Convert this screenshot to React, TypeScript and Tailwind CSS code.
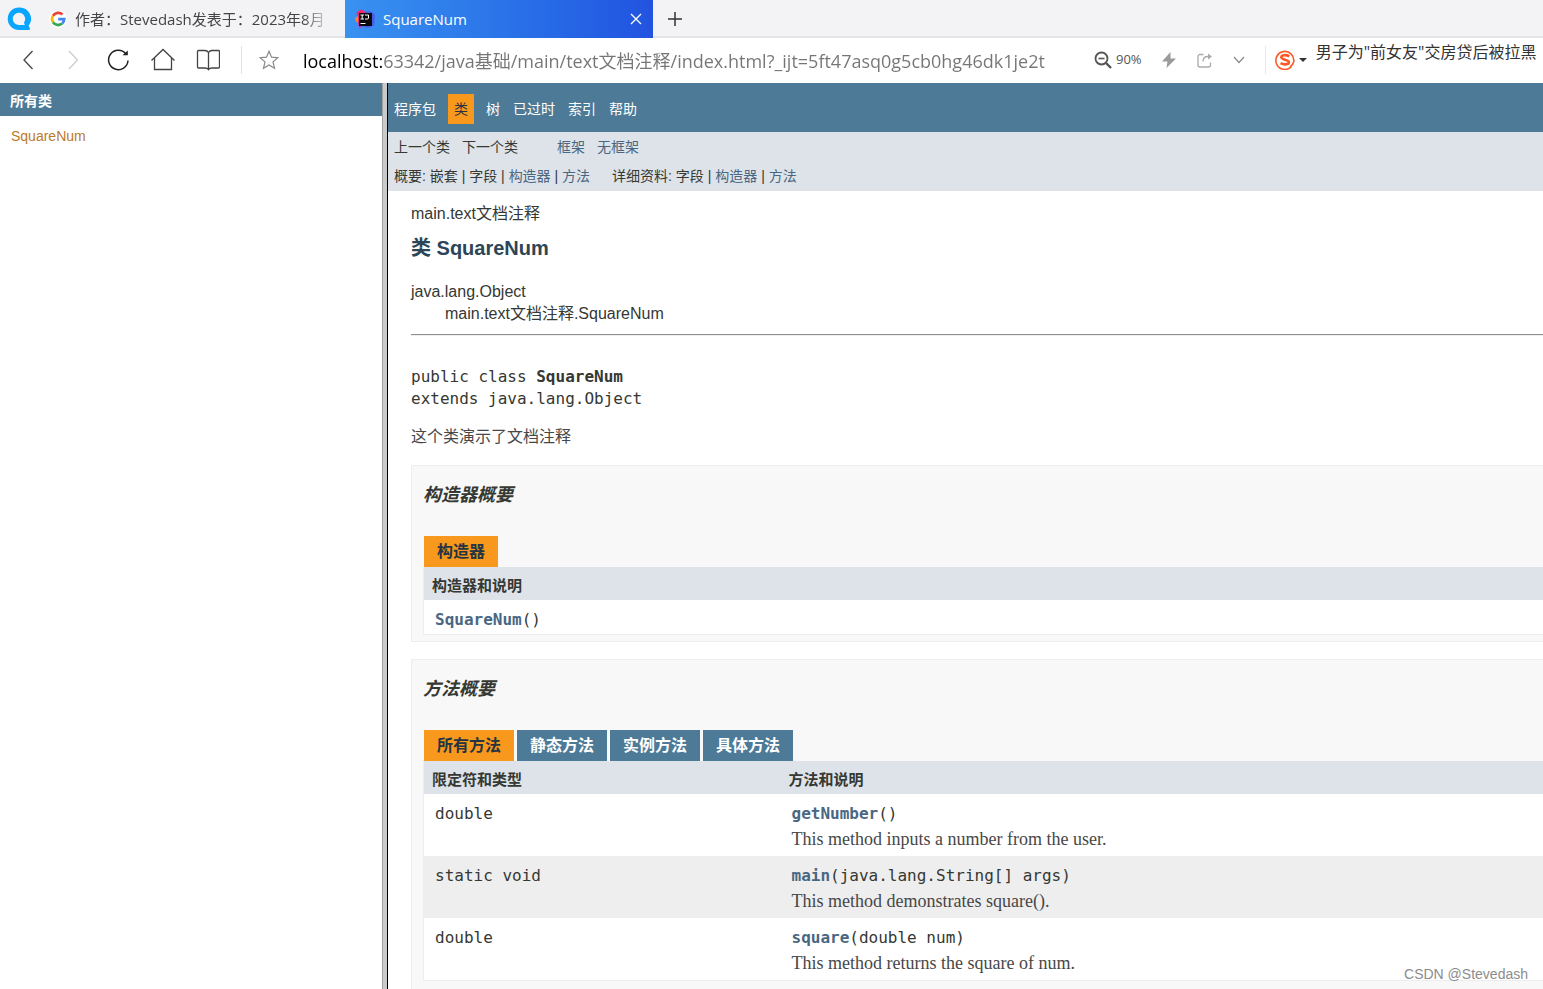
import type { ReactNode } from 'react';
import { clsx } from 'clsx';

const UI_FONT = "font-['Open_Sans','Noto_Sans_CJK_SC',sans-serif]";
const DOC_FONT = "font-['Liberation_Sans','Noto_Sans_CJK_SC',sans-serif]";
const CODE_FONT = "font-['DejaVu_Sans_Mono',monospace]";
const SERIF_FONT = "font-['Liberation_Serif','Noto_Sans_CJK_SC',serif]";

const methods = [
  {
    type: 'double',
    name: 'getNumber',
    args: '()',
    text: 'This method inputs a number from the user.',
  },
  {
    type: 'static void',
    name: 'main',
    args: '(java.lang.String[] args)',
    text: 'This method demonstrates square().',
  },
  {
    type: 'double',
    name: 'square',
    args: '(double num)',
    text: 'This method returns the square of num.',
  },
];

const methodTabs = ['所有方法', '静态方法', '实例方法', '具体方法'];

function BrowserLogo() {
  return (
    <svg viewBox="0 0 24 24" className="h-6 w-6 shrink-0" aria-hidden="true">
      <path
        d="M12 .5a11.3 11.3 0 1 0 0 22.6h9.3c1.6 0 2-1.2 1.3-2.5l-1-1.9A11.3 11.3 0 0 0 12 .5Z"
        fill="#0aa5ff"
      />
      <path
        d="M12 5.7a6.2 6.2 0 1 0 0 12.4h4.8c.9 0 1.1-.6.7-1.3l-.7-1.1A6.2 6.2 0 0 0 12 5.7Z"
        fill="#f3f3f6"
      />
    </svg>
  );
}

function GoogleIcon() {
  return (
    <svg viewBox="0 0 18 18" className="h-[18px] w-[18px] shrink-0" aria-hidden="true">
      <circle cx="9" cy="9" r="9" fill="#fff" />
      <g fill="none" strokeWidth="2.8">
        <path d="M4 5.8A6.200 6.200 0 0 1 13.500 4.500" stroke="#ea4335" />
        <path d="M4 5.800a6.200 6.200 0 0 0 0 6.400" stroke="#fbbc05" />
        <path d="M4 12.200a6.200 6.200 0 0 0 9.200 1.300" stroke="#34a853" />
        <path d="M13.200 13.500A6 6 0 0 0 15.200 9.200H9.200" stroke="#4285f4" />
      </g>
    </svg>
  );
}

function IntellijIcon() {
  return (
    <svg viewBox="0 0 20 20" className="h-5 w-5 shrink-0" aria-hidden="true">
      <path d="M1.500 3.500 6 .5l5 2.500-2 12-4 4-2-4V9Z" fill="#f5266d" />
      <path d="M0 9.500 3 7v6.500L1 12.500Z" fill="#fd8b1d" />
      <path d="M10 2.500h6l4 3-1 11-6 2.500-6-2Z" fill="#4b5bea" />
      <path d="m2.500 14 6 2-4 4Z" fill="#b33ad6" />
      <rect x="4" y="4" width="13" height="13" fill="#0b0b0d" />
      <path
        d="M5.500 6h3.500M7.200 6v4M5.500 10h3.500M10 6h3.500v3q0 1-1.200 1H10M5.500 14.500h5"
        stroke="#fff"
        strokeWidth="1"
        fill="none"
      />
    </svg>
  );
}

function ToolButton({ label, children }: { label: string; children: ReactNode }) {
  return (
    <button type="button" aria-label={label} className="flex h-11 w-[45px] items-center justify-center">
      <svg
        viewBox="0 0 24 24"
        className="h-6 w-6"
        fill="none"
        stroke="#444"
        strokeWidth="1.3"
        aria-hidden="true"
      >
        {children}
      </svg>
    </button>
  );
}

function TabStrip() {
  return (
    <div className="flex h-[38px] items-start border-b-2 border-[#e5e5e5] bg-[#f3f3f6] text-[15px]">
      <div className="flex h-[38px] w-[345px] shrink-0 items-center pl-[7px]">
        <BrowserLogo />
        <button type="button" className="ml-[18px] flex items-center gap-2 text-[#444]">
          <GoogleIcon />
          <span className="w-[252px] overflow-hidden text-left whitespace-nowrap [mask-image:linear-gradient(to_right,#000_228px,transparent_256px)]">
            作者：Stevedash发表于：2023年8月
          </span>
        </button>
      </div>
      <div className="flex h-[38px] w-[308px] shrink-0 items-center bg-linear-to-r from-[#3a92f0] to-[#2253e0] pr-[11px] pl-[10px] text-white">
        <IntellijIcon />
        <span className="ml-2 flex-1">SquareNum</span>
        <button type="button" aria-label="关闭标签页">
          <svg viewBox="0 0 12 12" className="h-3 w-3" stroke="#fff" strokeWidth="1.3" aria-hidden="true">
            <path d="m1 1 10 10M11 1 1 11" />
          </svg>
        </button>
      </div>
      <button type="button" aria-label="新标签页" className="flex h-[38px] w-11 items-center justify-center">
        <svg viewBox="0 0 14 14" className="h-[14px] w-[14px]" stroke="#333" strokeWidth="1.5" aria-hidden="true">
          <path d="M7 0v14M0 7h14" />
        </svg>
      </button>
    </div>
  );
}

function Toolbar() {
  return (
    <div className="flex h-[45px] items-center bg-white pb-px pl-[5px]">
      <ToolButton label="后退">
        <path d="M16.500 3 8 12l8.500 9" />
      </ToolButton>
      <ToolButton label="前进">
        <path d="m8 3 8.500 9L8 21" stroke="#ccc" />
      </ToolButton>
      <ToolButton label="刷新">
        <path d="M22 12.500A9.700 9.700 0 1 1 20 6" stroke="#222" strokeWidth="1.5" />
        <path d="M16.500 7.300h5.300V2.500Z" fill="#222" stroke="none" />
      </ToolButton>
      <ToolButton label="主页">
        <path d="M.5 12.500 12 1.500l11.500 11M3.500 10v11.500h17V10" />
      </ToolButton>
      <ToolButton label="书签">
        <path
          d="M12.500 4.500C11.500 2.900 10.200 2.500 9 2.500H2.500a1 1 0 0 0-1 1V19a1 1 0 0 0 1 1H9c1.700 0 2.800.5 3.500 1.600.7-1.100 1.800-1.600 3.500-1.600h6.500a1 1 0 0 0 1-1V3.500a1 1 0 0 0-1-1H16c-1.200 0-2.500.4-3.500 2Zm0 0v17"
        />
      </ToolButton>
      <span className="ml-[11px] h-7 w-px bg-[#e2e2e2]" />
      <button type="button" aria-label="收藏" className="ml-[17px] flex w-5 justify-center">
        <svg viewBox="0 0 20 20" className="h-5 w-5" fill="none" stroke="#888" strokeWidth="1.2" aria-hidden="true">
          <path d="m10 1.300 2.500 5.900 6.300.5-4.800 4.200 1.500 6.300L10 14.900l-5.500 3.300L6 11.900 1.200 7.700l6.300-.5Z" />
        </svg>
      </button>
      <input
        type="text"
        aria-label="地址"
        defaultValue="localhost:63342/java基础/main/text文档注释/index.html?_ijt=5ft47asq0g5cb0hg46dk1je2t"
        className="ml-6 h-8 min-w-0 flex-1 bg-[linear-gradient(to_right,#000_79px,#757575_79px)] bg-clip-text text-[18px] text-transparent outline-none"
      />
      <div className="flex h-full w-[449px] shrink-0 items-center">
        <button type="button" className="flex items-center gap-1 text-[13px] text-[#555]">
          <svg viewBox="0 0 18 18" className="h-[18px] w-[18px]" fill="none" stroke="#555" aria-hidden="true">
            <circle cx="7.500" cy="7.500" r="6" strokeWidth="1.8" />
            <path d="M4.500 7.500h6" strokeWidth="1.6" />
            <path d="m12 12 5 5" strokeWidth="2.4" />
          </svg>
          90%
        </button>
        <button type="button" aria-label="加速" className="ml-[19px]">
          <svg viewBox="0 0 16 18" className="h-[18px] w-4" fill="#9a9a9a" aria-hidden="true">
            <path d="M9.500 1 1 10.500h5.500L5.500 17l9.500-9.500H9.500Z" />
          </svg>
        </button>
        <button type="button" aria-label="分享" className="ml-5">
          <svg viewBox="0 0 16 16" className="h-4 w-4" fill="none" stroke="#aaa" strokeWidth="1.3" aria-hidden="true">
            <path d="M6.500 2.500H3a2 2 0 0 0-2 2V13a2 2 0 0 0 2 2h8.500a2 2 0 0 0 2-2v-2.500M6 9.500C6 6 8 4.500 11 4.500" />
            <path d="M11 1.500v6l4-3Z" fill="#aaa" stroke="none" />
          </svg>
        </button>
        <button type="button" aria-label="更多" className="ml-5">
          <svg viewBox="0 0 12 8" className="h-2 w-3" fill="none" stroke="#888" strokeWidth="1.2" aria-hidden="true">
            <path d="m1 1 5 5.500L11 1" />
          </svg>
        </button>
        <span className="ml-5 h-7 w-px bg-[#e6e6e6]" />
        <button type="button" aria-label="搜索引擎" className="ml-[9px] flex items-center gap-1">
          <svg viewBox="0 0 20 20" className="h-5 w-5" fill="none" stroke="#fa5a28" aria-hidden="true">
            <path d="M16.500 16.500A9 9 0 1 1 18.800 11.500q-.8 3.500-3.800 5.500" strokeWidth="1.6" />
            <path
              d="M14.300 6.300C11.500 4.600 6.300 4.700 6.300 7.300c0 2.800 7.600 1.900 7.600 4.900 0 2.700-5.500 2.700-8.400.9"
              strokeWidth="2.600"
            />
          </svg>
          <span className="border-x-4 border-t-4 border-x-transparent border-t-[#333]" />
        </button>
        <a
          href="#hot"
          className="ml-[9px] flex-1 self-start overflow-hidden pt-[2px] text-[16px] leading-6 whitespace-nowrap text-[#333]"
        >
          男子为"前女友"交房贷后被拉黑
        </a>
      </div>
    </div>
  );
}

function DocLink({ children }: { children: ReactNode }) {
  return (
    <a href="#doc" className="text-[#4a6782]">
      {children}
    </a>
  );
}

function Summary({ title, children }: { title: string; children: ReactNode }) {
  return (
    <section className="mb-[17px] border border-r-0 border-[#ededed] bg-[#f8f8f8] pb-[6px] pl-[11px] last:pb-6">
      <h3 className="mt-4 mb-[27px] text-[18px] leading-[27px] font-bold italic">{title}</h3>
      {children}
    </section>
  );
}

function Signature({ name, args }: { name: string; args: string }) {
  return (
    <code className={clsx('block text-[16px] leading-[22px]', CODE_FONT)}>
      <a href="#member" className="font-bold text-[#4a6782]">
        {name}
      </a>
      {args}
    </code>
  );
}

function ClassPage() {
  return (
    <main className="min-w-0 flex-1 overflow-hidden bg-white text-[#353833]">
      <nav className="flex h-[49px] items-center bg-[#4d7a97] pt-[3px] pl-[6px] text-[14px] text-white">
        <a href="#package">程序包</a>
        <span className="mx-3 bg-[#f8981d] px-[6px] py-[5px] leading-5 text-[#253441]">类</span>
        <div className="flex gap-[13px]">
          <a href="#tree">树</a>
          <a href="#deprecated">已过时</a>
          <a href="#index">索引</a>
          <a href="#help">帮助</a>
        </div>
      </nav>
      <div className="h-[59px] bg-[#dee3e9] pt-px pl-[6px] text-[14px] leading-[29px]">
        <div className="flex gap-3">
          <span>上一个类</span>
          <span>下一个类</span>
          <span className="ml-[27px]">
            <DocLink>框架</DocLink>
          </span>
          <DocLink>无框架</DocLink>
        </div>
        <div className="flex gap-[22px]">
          <span>
            概要: 嵌套 | 字段 | <DocLink>构造器</DocLink> | <DocLink>方法</DocLink>
          </span>
          <span>
            详细资料: 字段 | <DocLink>构造器</DocLink> | <DocLink>方法</DocLink>
          </span>
        </div>
      </div>

      <div className="pt-3 pl-[23px] text-[16px] leading-[22px]">
        <div>main.text文档注释</div>
        <h2 className="mt-[9px] text-[20px] leading-7 font-bold text-[#2c4557]">类 SquareNum</h2>
        <ul className="mt-[19px]">
          <li>java.lang.Object</li>
          <li className="pl-[34px]">main.text文档注释.SquareNum</li>
        </ul>
        <hr className="mt-[9px] mb-[30px] h-[2px] border-t border-b border-t-[#909090] border-b-[#ededed]" />
        <pre className={CODE_FONT}>
          public class <strong>SquareNum</strong>
          {'\n'}extends java.lang.Object
        </pre>
        <p className="mt-4 mb-[17px] text-[#474747]">这个类演示了文档注释</p>

        <div>
          <Summary title="构造器概要">
            <table className="w-full border-b border-l border-[#ededed]">
              <caption className="text-left">
                <span className="ml-px inline-block bg-[#f8981d] px-[13px] align-top leading-[31px] font-bold text-[#253441]">
                  构造器
                </span>
              </caption>
              <thead>
                <tr className="h-[33px] bg-[#dee3e9] text-left text-[15px]">
                  <th className="pt-1 pl-2 font-bold">构造器和说明</th>
                </tr>
              </thead>
              <tbody>
                <tr className="h-[34px] bg-white">
                  <td className="pt-[9px] pb-[3px] pl-[11px]">
                    <Signature name="SquareNum" args="()" />
                  </td>
                </tr>
              </tbody>
            </table>
          </Summary>

          <Summary title="方法概要">
            <table className="w-full table-fixed border-b border-l border-[#ededed]">
              <caption className="text-left">
                <span className="ml-px flex gap-[3px] leading-[31px] font-bold">
                  {methodTabs.map((tab, i) => (
                    <button
                      key={tab}
                      type="button"
                      className={clsx(
                        'px-[13px]',
                        i === 0 ? 'bg-[#f8981d] text-[#253441]' : 'bg-[#4d7a97] text-white',
                      )}
                    >
                      {tab}
                    </button>
                  ))}
                </span>
              </caption>
              <thead>
                <tr className="h-[33px] bg-[#dee3e9] text-left text-[15px]">
                  <th className="w-[357px] pt-1 pl-2 font-bold">限定符和类型</th>
                  <th className="pt-1 pl-2 font-bold">方法和说明</th>
                </tr>
              </thead>
              <tbody>
                {methods.map((m) => (
                  <tr key={m.name} className="h-[62px] bg-white align-top even:bg-[#eeeeef]">
                    <td className="pt-[9px] pl-[11px]">
                      <code className={clsx('block', CODE_FONT)}>{m.type}</code>
                    </td>
                    <td className="pt-[9px] pl-[11px]">
                      <Signature name={m.name} args={m.args} />
                      <div className={clsx('mt-[3px] text-[18px] text-[#474747]', SERIF_FONT)}>{m.text}</div>
                    </td>
                  </tr>
                ))}
              </tbody>
            </table>
          </Summary>
        </div>
      </div>
    </main>
  );
}

export default function App() {
  return (
    <div className={clsx('relative flex h-screen flex-col overflow-hidden', UI_FONT)}>
      <TabStrip />
      <Toolbar />
      <div className={clsx('flex min-h-0 flex-1', DOC_FONT)}>
        <aside className="w-[382px] shrink-0 bg-white text-[14px]">
          <h1 className="bg-[#4d7a97] pt-[3px] pl-[10px] leading-[30px] font-bold text-white">所有类</h1>
          <a href="#SquareNum" className="mt-[10px] ml-[11px] block leading-5 text-[#bb7a2a]">
            SquareNum
          </a>
        </aside>
        <div className="w-[6px] shrink-0 border-r border-l border-r-black border-l-[#a0a0a0] bg-[#cacaca]" />
        <ClassPage />
      </div>
      <div className={clsx('absolute right-[15px] bottom-[5px] text-[14px] leading-5 text-[#8c8c8c]', DOC_FONT)}>
        CSDN @Stevedash
      </div>
    </div>
  );
}
